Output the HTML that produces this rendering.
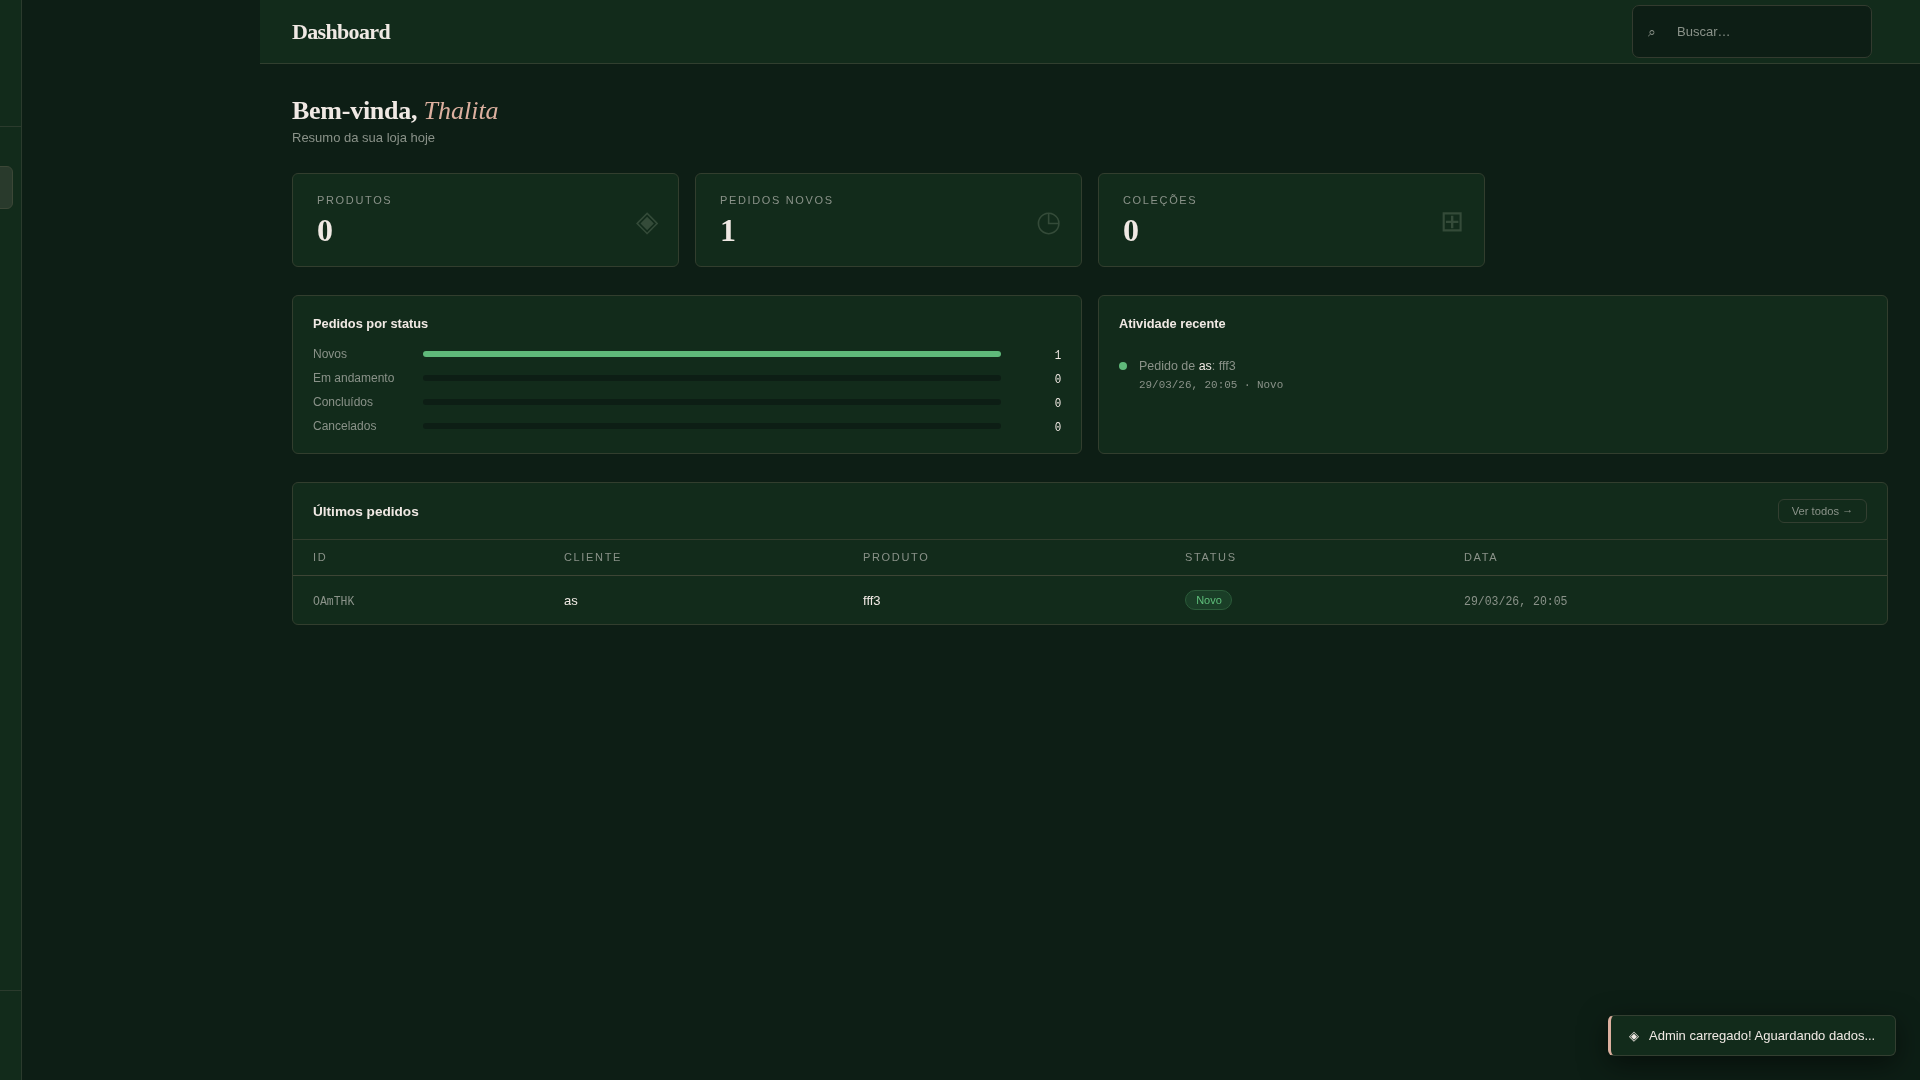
<!DOCTYPE html>
<html lang="pt-BR">
<head>
<meta charset="utf-8">
<title>Dashboard</title>
<style>
*{box-sizing:border-box;margin:0;padding:0}
html,body{width:1920px;height:1080px;overflow:hidden}
body{background:#0d1e15;font-family:"Liberation Sans",sans-serif;color:#f0e9e4;position:relative}
.mono{font-family:"Liberation Mono",monospace;display:inline-block;transform-origin:0 50%;white-space:nowrap}
/* sidebar */
.side{position:absolute;left:0;top:0;width:22px;height:1080px;background:#122b1b;border-right:1px solid #2b3b2d}
.side .l1{position:absolute;left:0;top:126px;width:21px;height:1px;background:#2b3b2d}
.side .l2{position:absolute;left:0;top:990px;width:21px;height:1px;background:#2b3b2d}
.side .btn{position:absolute;left:-12px;top:166px;width:25px;height:43px;border-radius:6px;background:#293a2c;border:1px solid #3c4737}
/* header */
.hdr{position:absolute;left:260px;top:0;width:1660px;height:64px;background:#122b1b;border-bottom:1px solid #313f2f}
.hdr h1{position:absolute;left:32px;top:19px;font-family:"Liberation Serif",serif;font-weight:bold;font-size:22px;line-height:26px;letter-spacing:-0.66px;color:#f0e9e4;white-space:nowrap}
.search{position:absolute;left:1372px;top:5px;width:240px;height:53px;border:1px solid #333b2f;border-radius:7px;background:#0d1e15}
.search .ic{position:absolute;left:15px;top:17px;font-size:14px;line-height:18px;color:#8a9289}
.search .ph{position:absolute;left:44px;top:18px;font-size:13px;line-height:16px;color:#8a9289}
/* welcome */
.welcome{position:absolute;left:292px;top:96px}
.welcome h2{font-family:"Liberation Serif",serif;font-weight:bold;font-size:26px;line-height:30px;letter-spacing:-0.26px;color:#f0e9e4;white-space:nowrap}
.welcome h2 i{font-weight:normal;letter-spacing:0;color:#dcb09f}
.welcome p{font-size:13px;line-height:16px;color:#8a9289;margin-top:4px;white-space:nowrap}
/* cards */
.card{position:absolute;background:#122b1b;border:1px solid #323e2e;border-radius:6px}
.stat{top:173px;width:387px;height:94px}
.stat .lbl{position:absolute;left:24px;top:20px;font-size:11px;letter-spacing:0.15em;color:#8a9289;line-height:13px;white-space:nowrap}
.stat .val{position:absolute;left:24px;top:37px;font-family:"Liberation Serif",serif;font-weight:bold;font-size:32px;line-height:38px;color:#f0e9e4}
.stat .ico{position:absolute;right:20px;top:31px;font-size:29px;line-height:32px;color:#344b39}
.ptitle{position:absolute;left:20px;top:20px;font-size:12.8px;font-weight:bold;line-height:16px;color:#f0e9e4;white-space:nowrap}
.row{position:absolute;left:20px;width:748px;height:16px}
.row .rl{position:absolute;left:0;top:-1px;font-size:12px;line-height:16px;color:#8a9289;white-space:nowrap}
.row .bar{position:absolute;left:110px;top:4px;width:578px;height:6px;border-radius:3px;background:#0d1e15}
.row .bar b{display:block;height:6px;border-radius:3px;background:#5fb97a}
.row .rn{position:absolute;right:0;top:1px;line-height:16px;color:#f0e9e4;font-size:12px;transform:scaleX(.9);transform-origin:100% 50%}
.act .dot{position:absolute;left:20px;top:66px;width:8px;height:8px;border-radius:50%;background:#5fb97a}
.act .t1{position:absolute;left:40px;top:62px;font-size:12.48px;line-height:16px;color:#8a9289;white-space:nowrap}
.act .t1 span{color:#f0e9e4}
.act .t2{position:absolute;left:40px;top:82px;line-height:14px;color:#8a9289;font-size:11.5px;transform:scaleX(.95)}
/* table */
.tbl{top:482px;left:292px;width:1596px;height:143px}
.tbl .th{position:absolute;left:20px;top:21px;font-size:13.6px;font-weight:bold;line-height:16px;color:#f0e9e4;white-space:nowrap}
.tbl .vt{position:absolute;right:20px;top:16px;width:89px;height:24px;border:1px solid #333f31;border-radius:6px;font-size:11.2px;line-height:22px;text-align:center;color:#8a9289;white-space:nowrap}
.tbl .hl1{position:absolute;left:0;top:56px;width:100%;height:1px;background:#323e2e}
.tbl .hl2{position:absolute;left:0;top:92px;width:100%;height:1px;background:#3d4535}
.tbl .c{position:absolute;line-height:16px;white-space:nowrap}
.tbl .hc{top:66px;font-size:11px;letter-spacing:0.15em;color:#8a9289}
.tbl .dc{top:110px;font-size:13px;color:#f0e9e4}
.badge{position:absolute;left:892px;top:107px;width:47px;height:20px;border-radius:10px;border:1px solid #2b5a39;background:#1a3e27;color:#5fbf7b;font-size:11px;line-height:18px;text-align:center;text-indent:1px}
/* toast */
.toast{position:absolute;left:1608px;top:1015px;width:288px;height:41px;background:#122b1b;border:1px solid #333f31;border-left:3px solid #dcb09f;border-radius:6px;box-shadow:0 8px 28px rgba(0,0,0,.5)}
.toast .ti{position:absolute;left:18px;top:12px;font-size:13px;line-height:16px;color:#f0e9e4}
.toast .tt{position:absolute;left:38px;top:12px;font-size:13px;line-height:16px;color:#f0e9e4;white-space:nowrap}
.gs{will-change:transform}
</style>
</head>
<body>
<div class="gs" style="position:absolute;left:0;top:0;width:1920px;height:1080px">
<div class="side"><div class="l1"></div><div class="btn"></div><div class="l2"></div></div>

<div class="hdr">
  <h1>Dashboard</h1>
  <div class="search"><span class="ic">⌕</span><span class="ph">Buscar…</span></div>
</div>

<div class="welcome">
  <h2>Bem-vinda, <i>Thalita</i></h2>
  <p>Resumo da sua loja hoje</p>
</div>

<div class="card stat" style="left:292px"><div class="lbl">PRODUTOS</div><div class="val">0</div><div class="ico">◈</div></div>
<div class="card stat" style="left:695px"><div class="lbl">PEDIDOS NOVOS</div><div class="val">1</div><div class="ico">◷</div></div>
<div class="card stat" style="left:1098px"><div class="lbl">COLEÇÕES</div><div class="val">0</div><div class="ico">⊞</div></div>

<div class="card" style="left:292px;top:295px;width:790px;height:159px">
  <div class="ptitle">Pedidos por status</div>
  <div class="row" style="top:51px"><span class="rl">Novos</span><div class="bar"><b style="width:100%"></b></div><span class="rn mono">1</span></div>
  <div class="row" style="top:75px"><span class="rl">Em andamento</span><div class="bar"></div><span class="rn mono">0</span></div>
  <div class="row" style="top:99px"><span class="rl">Concluídos</span><div class="bar"></div><span class="rn mono">0</span></div>
  <div class="row" style="top:123px"><span class="rl">Cancelados</span><div class="bar"></div><span class="rn mono">0</span></div>
</div>

<div class="card act" style="left:1098px;top:295px;width:790px;height:159px">
  <div class="ptitle">Atividade recente</div>
  <div class="dot"></div>
  <div class="t1">Pedido de <span>as</span>: fff3</div>
  <div class="t2 mono">29/03/26, 20:05 · Novo</div>
</div>

<div class="card tbl">
  <div class="th">Últimos pedidos</div>
  <div class="vt">Ver todos <span style="position:relative;top:-2px">→</span></div>
  <div class="hl1"></div>
  <div class="c hc" style="left:20px">ID</div>
  <div class="c hc" style="left:271px">CLIENTE</div>
  <div class="c hc" style="left:570px">PRODUTO</div>
  <div class="c hc" style="left:892px">STATUS</div>
  <div class="c hc" style="left:1171px">DATA</div>
  <div class="hl2"></div>
  <div class="c dc" style="left:20px"><span class="mono" style="font-size:12.5px;color:#8a9289;transform:scaleX(.92)">OAmTHK</span></div>
  <div class="c dc" style="left:271px">as</div>
  <div class="c dc" style="left:570px">fff3</div>
  <div class="badge">Novo</div>
  <div class="c dc" style="left:1171px"><span class="mono" style="font-size:12.5px;color:#8a9289;transform:scaleX(.92)">29/03/26, 20:05</span></div>
</div>

<div class="toast"><span class="ti">◈</span><span class="tt">Admin carregado! Aguardando dados...</span></div>
</div>
</body>
</html>
